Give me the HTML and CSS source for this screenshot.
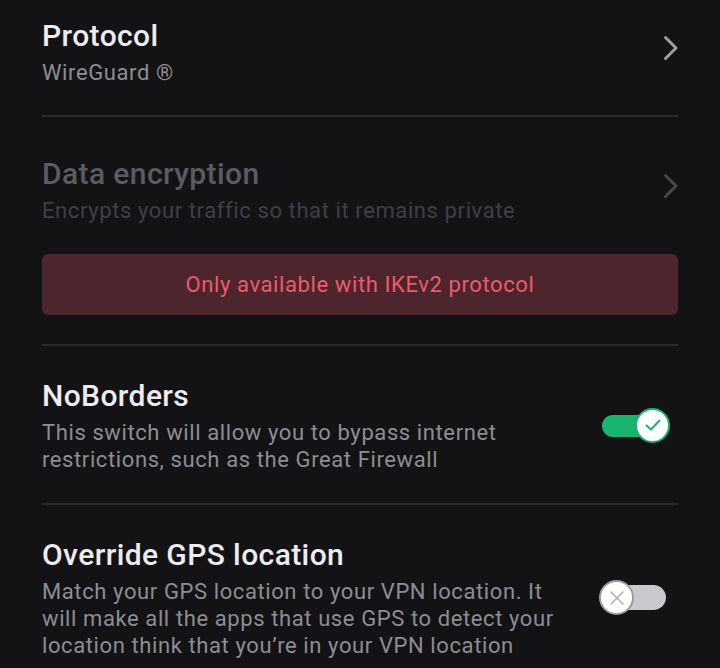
FILE: index.html
```html
<!DOCTYPE html>
<html lang="en">
<head>
    <meta charset="UTF-8">
    <meta name="viewport" content="width=device-width, initial-scale=1.0">
    <title>VPN Settings</title>
    <link rel="stylesheet" href="styles.css">
</head>
<body>
    <div class="settings">
        <!-- Protocol -->
        <div class="setting setting-first">
            <div class="setting-text">
                <h2 class="setting-title">Protocol</h2>
                <p class="setting-sub">WireGuard ®</p>
            </div>
            <svg class="chevron" width="16" height="26" viewBox="0 0 16 26">
                <path d="M2.5 2.5 L13 13 L2.5 23.5" fill="none" stroke="currentColor" stroke-width="3" stroke-linecap="round" stroke-linejoin="round"/>
            </svg>
        </div>

        <!-- Data encryption (disabled) -->
        <div class="setting-group disabled">
            <div class="setting">
                <div class="setting-text">
                    <h2 class="setting-title">Data encryption</h2>
                    <p class="setting-sub">Encrypts your traffic so that it remains private</p>
                </div>
                <svg class="chevron" width="16" height="26" viewBox="0 0 16 26">
                    <path d="M2.5 2.5 L13 13 L2.5 23.5" fill="none" stroke="currentColor" stroke-width="3" stroke-linecap="round" stroke-linejoin="round"/>
                </svg>
            </div>
            <div class="notice">Only available with IKEv2 protocol</div>
        </div>

        <!-- NoBorders -->
        <div class="setting">
            <div class="setting-text">
                <h2 class="setting-title">NoBorders</h2>
                <p class="setting-sub">This switch will allow you to bypass internet restrictions, such as the Great Firewall</p>
            </div>
            <div class="switch on">
                <span class="track"></span>
                <span class="thumb">
                    <svg width="20" height="20" viewBox="0 0 20 20">
                        <path d="M3.5 10.5 L8 14.5 L16.5 5.5" fill="none" stroke="#19b46f" stroke-width="2" stroke-linecap="round" stroke-linejoin="round"/>
                    </svg>
                </span>
            </div>
        </div>

        <!-- Override GPS -->
        <div class="setting setting-last">
            <div class="setting-text">
                <h2 class="setting-title">Override GPS location</h2>
                <p class="setting-sub">Match your GPS location to your VPN location. It will make all the apps that use GPS to detect your location think that you’re in your VPN location</p>
            </div>
            <div class="switch off">
                <span class="track"></span>
                <span class="thumb">
                    <svg width="16" height="16" viewBox="0 0 16 16">
                        <path d="M2 2 L14 14 M14 2 L2 14" fill="none" stroke="#b0b0b4" stroke-width="1.6" stroke-linecap="round"/>
                    </svg>
                </span>
            </div>
        </div>
    </div>
</body>
</html>
```

FILE: styles.css
```css
body {
    margin: 0;
    padding: 0;
    background-color: #131316;
    font-family: Roboto, "Noto Sans", Arial, sans-serif;
    overflow: hidden;
}

.settings {
    padding: 0 42px;
}

.setting,
.setting-group {
    border-bottom: 2px solid #2a2a2e;
}

.setting-group .setting {
    border-bottom: none;
    padding-top: 39px;
    padding-bottom: 0;
}

.setting {
    display: flex;
    align-items: center;
    padding: 32px 0 30px;
}

.setting-first {
    padding-top: 18px;
    padding-bottom: 29px;
}

.setting-last {
    border-bottom: none;
}

.setting-text {
    flex: 1;
    max-width: 528px;
}

.setting-title {
    margin: 0 0 5px;
    font-size: 30px;
    line-height: 36px;
    font-weight: 500;
    letter-spacing: 0.4px;
    color: #ececef;
}

.setting-sub {
    margin: 0;
    font-size: 22px;
    line-height: 27px;
    letter-spacing: 0.6px;
    color: #8d8d92;
}

.chevron {
    margin-left: auto;
    margin-right: -1px;
    margin-bottom: 8px;
    color: #9e9ea3;
}

.disabled .setting-title {
    color: #5b5b60;
}

.disabled .setting-sub {
    color: #3f3f44;
}

.disabled .chevron {
    color: #48484d;
}

.notice {
    margin: 30px 0 29px;
    height: 61px;
    display: flex;
    align-items: center;
    justify-content: center;
    background-color: #4d252d;
    border-radius: 6px;
    color: #ec5a6e;
    font-size: 22px;
    letter-spacing: 0.6px;
}

.switch {
    position: relative;
    margin-left: auto;
    width: 70px;
    height: 36px;
}

.switch .track {
    position: absolute;
    top: 7px;
    height: 22px;
    border-radius: 11px;
}

.switch .thumb {
    position: absolute;
    top: 0;
    width: 31px;
    height: 31px;
    border-radius: 50%;
    background-color: #fff;
    display: flex;
    align-items: center;
    justify-content: center;
}

.switch.on {
    margin-right: 8px;
}

.switch.on .track {
    left: 2px;
    width: 58px;
    background-color: #19b46f;
}

.switch.on .thumb {
    right: 0;
    top: 0;
    border: 2px solid #19b46f;
}

.switch.off {
    margin-right: 9px;
}

.switch.off .track {
    left: 10px;
    width: 57px;
    top: 5px;
    height: 25px;
    border-radius: 13px;
    background-color: #c9c9cd;
}

.switch.off .thumb {
    left: 0;
    border: 2px solid #9c9ca0;
}
```
